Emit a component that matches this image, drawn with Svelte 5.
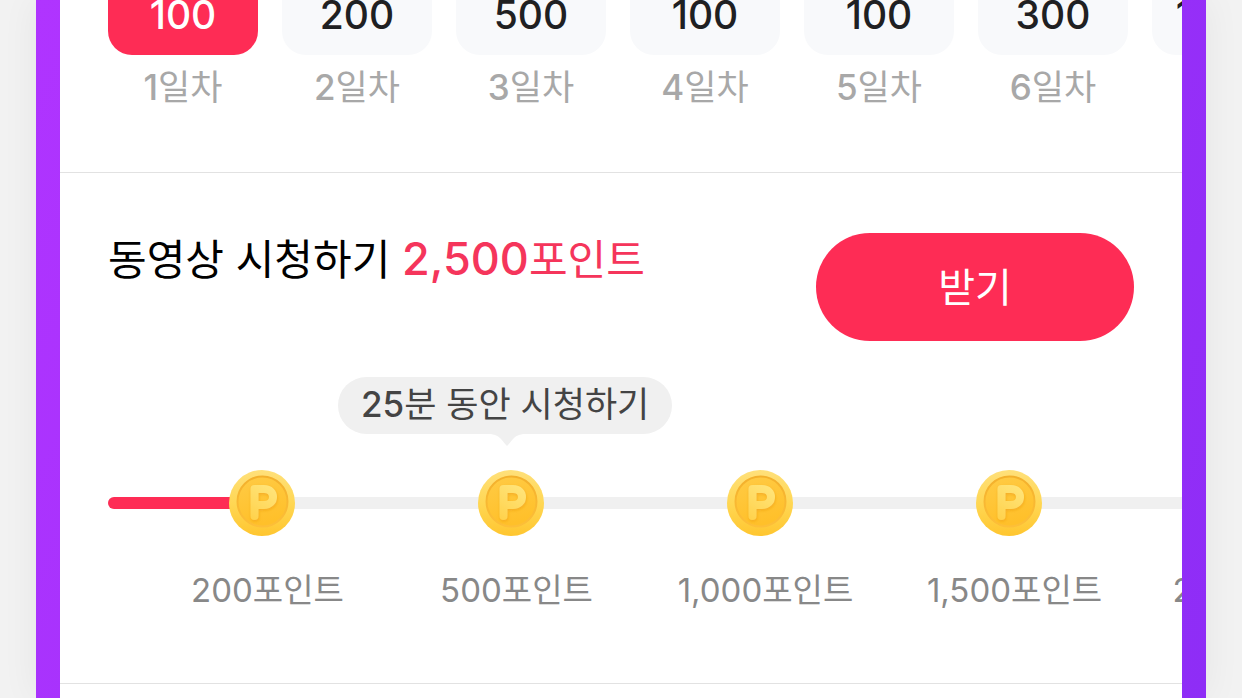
<script>
  let days = [
    { day: 1, points: "100", active: true },
    { day: 2, points: "200" },
    { day: 3, points: "500" },
    { day: 4, points: "100" },
    { day: 5, points: "100" },
    { day: 6, points: "300" },
    { day: 7, points: "1,000" }
  ];

  let steps = ["200포인트", "500포인트", "1,000포인트", "1,500포인트", "2,500포인트"];
</script>

<div class="frame">
  <main>
    <section class="attendance">
      <ul class="days">
        {#each days as item}
          <li>
            <div class="card" class:active={item.active}>{item.points}</div>
            <span class="day"><b>{item.day}</b>일차</span>
          </li>
        {/each}
      </ul>
    </section>

    <section class="watch">
      <header>
        <h2>동영상 시청하기 <em><b>2,500</b>포인트</em></h2>
        <button type="button">받기</button>
      </header>

      <div class="bubble">
        <b>25</b>분 동안 시청하기
        <svg class="tail" width="32" height="13" viewBox="0 0 32 13" aria-hidden="true">
          <path d="M0 0H32C27 1 25 2 22 5L17 11Q16 12.500 15 11L10 5C7 2 5 1 0 0Z" fill="#f0f0f0" />
        </svg>
      </div>

      <div class="progress">
        <div class="track"><div class="fill"></div></div>
        <ol class="steps">
          {#each steps as step}
            <li>
              <svg class="coin" viewBox="0 0 66 66" aria-hidden="true">
                <defs>
                  <linearGradient id="rim" x1="0" y1="0" x2="0" y2="1">
                    <stop offset="0" stop-color="#ffe07a" />
                    <stop offset="0.5" stop-color="#ffd754" />
                    <stop offset="1" stop-color="#ffc62f" />
                  </linearGradient>
                  <linearGradient id="face" x1="0" y1="0" x2="0.3" y2="1">
                    <stop offset="0" stop-color="#ffcb45" />
                    <stop offset="1" stop-color="#ffc02a" />
                  </linearGradient>
                  <linearGradient id="edge" x1="0" y1="0" x2="0" y2="1">
                    <stop offset="0" stop-color="#f3b02c" />
                    <stop offset="1" stop-color="#fdbf38" />
                  </linearGradient>
                  <linearGradient id="letter" gradientUnits="userSpaceOnUse" x1="46" y1="16" x2="24" y2="50">
                    <stop offset="0" stop-color="#ffe57c" />
                    <stop offset="1" stop-color="#ffd24c" />
                  </linearGradient>
                  <filter id="shade" x="-40%" y="-40%" width="180%" height="180%">
                    <feDropShadow dx="0.5" dy="1.5" stdDeviation="1.5" flood-color="#ee9c12" flood-opacity="0.6" />
                  </filter>
                </defs>
                <circle cx="33" cy="33" r="33" fill="url(#rim)" />
                <circle cx="33.5" cy="31.5" r="25" fill="url(#face)" stroke="url(#edge)" stroke-width="2" />
                <g filter="url(#shade)" fill="none" stroke="url(#letter)" stroke-width="8" stroke-linecap="round" stroke-linejoin="round">
                  <path d="M25.5 46V19H35C47 19 47 35 35 35H26" />
                </g>
              </svg>
              <span>{step}</span>
            </li>
          {/each}
        </ol>
      </div>
    </section>
  </main>
</div>

<style>
:global(body) {
  margin: 0;
  background: #f2f2f2;
  overflow: hidden;
}

.frame {
  margin: 0 36px;
  padding: 0 24px;
  min-height: 100vh;
  background: linear-gradient(115deg, #b034ff, #8e2df6);
  box-shadow: 0 0 36px rgba(0, 0, 0, 0.06);
  font-family: Inter, "Noto Sans CJK KR", sans-serif;
}

main {
  min-height: 100vh;
  background: #fff;
  overflow: hidden;
}

section {
  border-bottom: 1px solid #e2e2e2;
}

ul,
ol {
  list-style: none;
  margin: 0;
  padding: 0;
}

b {
  font-weight: 500;
}

.attendance {
  padding: 0 0 63px 48px;
}

.days {
  display: flex;
  gap: 24px;
}

.days li {
  flex: 0 0 150px;
  text-align: center;
}

.card {
  padding-bottom: 25px;
  border-radius: 0 0 24px 24px;
  background: #f8f9fb;
  color: #1f2022;
  font-size: 39px;
  font-weight: 500;
  line-height: 30px;
}

.card.active {
  background: #fe2c55;
  color: #fff;
}

.day {
  display: block;
  padding-top: 11px;
  color: #a8a8a8;
  font-size: 35px;
  line-height: 43px;
}

.watch {
  padding: 60px 0 71px 48px;
}

header {
  display: flex;
  justify-content: space-between;
  align-items: flex-start;
  padding-right: 48px;
}

h2 {
  margin: 0;
  color: #000;
  font-size: 42px;
  font-weight: 400;
  line-height: 52px;
}

em {
  color: #f5355b;
  font-style: normal;
}

em b {
  font-size: 45px;
}

button {
  width: 318px;
  height: 108px;
  padding: 0 0 4px;
  border: none;
  border-radius: 54px;
  background: #fe2c55;
  color: #fff;
  font-family: inherit;
  font-size: 40px;
  cursor: pointer;
}

.bubble {
  position: relative;
  width: fit-content;
  margin: 36px 0 0 230px;
  padding: 0 23px 3px;
  border-radius: 29px;
  background: #f0f0f0;
  color: #444;
  font-size: 35px;
  line-height: 54px;
}

.tail {
  position: absolute;
  top: 100%;
  left: 50%;
  margin-left: -14px;
}

.progress {
  position: relative;
  padding-top: 36px;
}

.track {
  position: absolute;
  top: 63px;
  left: 0;
  right: 0;
  height: 12px;
  border-radius: 6px 0 0 6px;
  background: #f0f0f0;
}

.fill {
  width: 154px;
  height: 12px;
  border-radius: 6px;
  background: #fe2c55;
}

.steps {
  position: relative;
  display: flex;
  padding-left: 35px;
}

.steps li {
  display: flex;
  flex: 0 0 249px;
  flex-direction: column;
  align-items: center;
}

.coin {
  width: 66px;
  height: 66px;
  margin-right: 12px;
}

.steps span {
  margin-top: 33px;
  color: #888;
  font-size: 33px;
  line-height: 43px;
}
</style>
